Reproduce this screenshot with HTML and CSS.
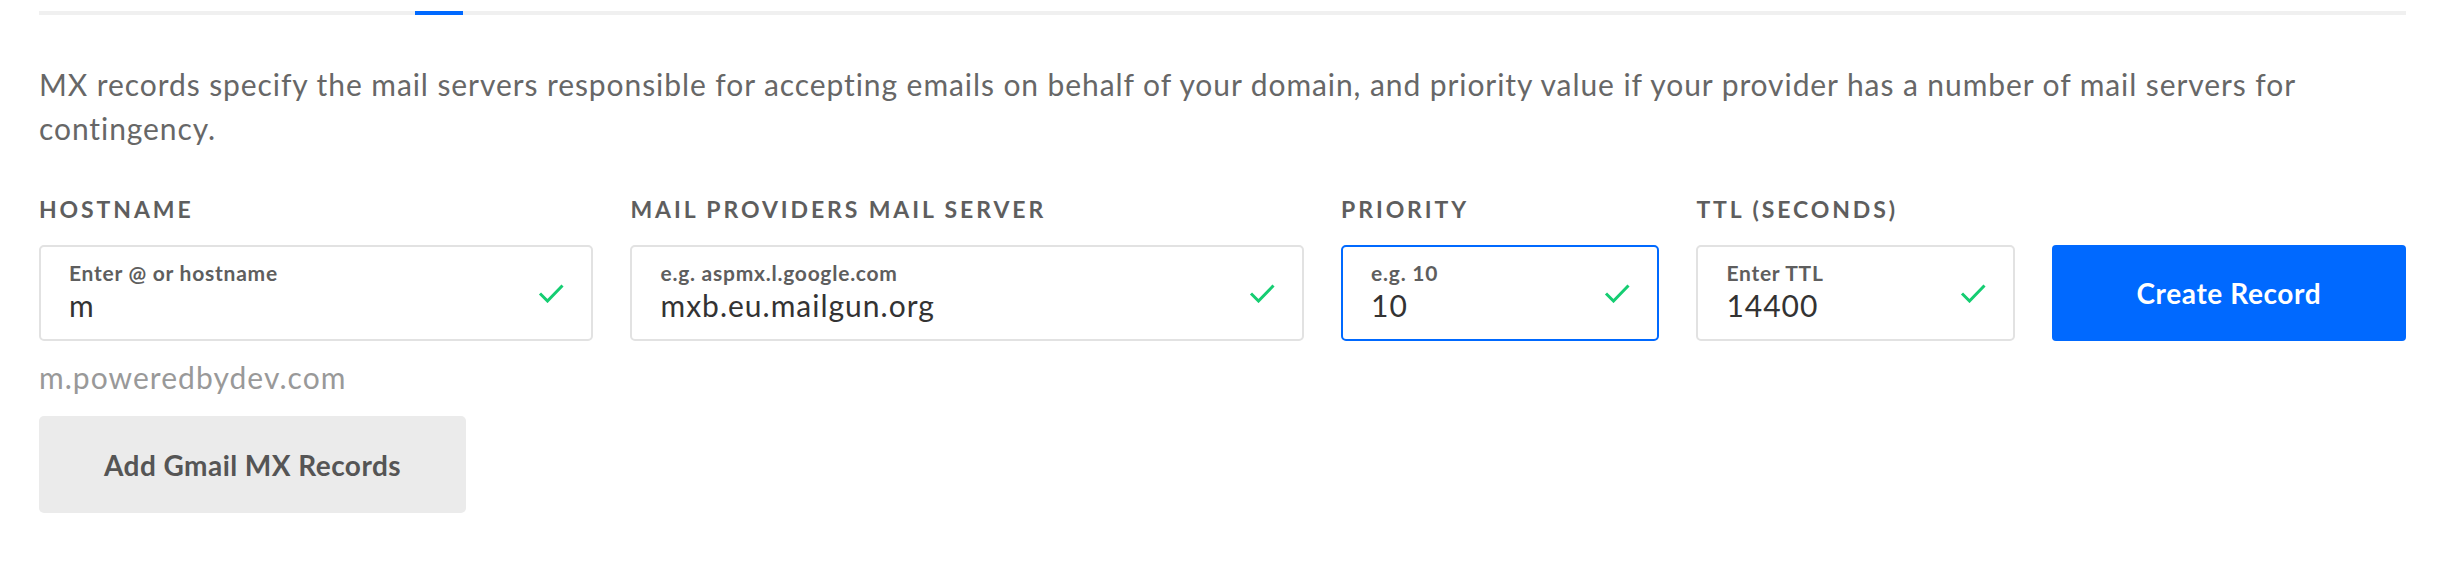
FILE: index.html
```html
<!DOCTYPE html>
<html lang="en">
<head>
<meta charset="utf-8">
<title>MX Records</title>
<link rel="stylesheet" href="styles.css">
</head>
<body>
<div class="page">
  <div class="tabbar">
    <div class="tab-spacer"></div>
    <div class="tab-active"></div>
  </div>

  <p class="intro">MX records specify the mail servers responsible for accepting emails on behalf of your domain, and priority value if your provider has a number of mail servers for contingency.</p>

  <div class="fields">
    <div class="field">
      <div class="field-label">HOSTNAME</div>
      <div class="input">
        <div class="input-text">
          <div class="input-hint">Enter @ or hostname</div>
          <div class="input-value">m</div>
        </div>
        <svg class="check" viewBox="0 0 26 20" width="26" height="20"><path d="M2 10.5 L9.5 18 L24.5 2.5" fill="none" stroke="#15cd72" stroke-width="3"/></svg>
      </div>
    </div>
    <div class="field">
      <div class="field-label">MAIL PROVIDERS MAIL SERVER</div>
      <div class="input">
        <div class="input-text">
          <div class="input-hint">e.g. aspmx.l.google.com</div>
          <div class="input-value">mxb.eu.mailgun.org</div>
        </div>
        <svg class="check" viewBox="0 0 26 20" width="26" height="20"><path d="M2 10.5 L9.5 18 L24.5 2.5" fill="none" stroke="#15cd72" stroke-width="3"/></svg>
      </div>
    </div>
    <div class="field">
      <div class="field-label">PRIORITY</div>
      <div class="input input-focused">
        <div class="input-text">
          <div class="input-hint">e.g. 10</div>
          <div class="input-value">10</div>
        </div>
        <svg class="check" viewBox="0 0 26 20" width="26" height="20"><path d="M2 10.5 L9.5 18 L24.5 2.5" fill="none" stroke="#15cd72" stroke-width="3"/></svg>
      </div>
    </div>
    <div class="field">
      <div class="field-label">TTL (SECONDS)</div>
      <div class="input">
        <div class="input-text">
          <div class="input-hint">Enter TTL</div>
          <div class="input-value">14400</div>
        </div>
        <svg class="check" viewBox="0 0 26 20" width="26" height="20"><path d="M2 10.5 L9.5 18 L24.5 2.5" fill="none" stroke="#15cd72" stroke-width="3"/></svg>
      </div>
    </div>
    <div class="field field-action">
      <button class="btn-primary" type="button">Create Record</button>
    </div>
  </div>

  <div class="helper">m.poweredbydev.com</div>

  <button class="btn-secondary" type="button">Add Gmail MX Records</button>
</div>
</body>
</html>
```

FILE: styles.css
```css
* {
  box-sizing: border-box;
}

html, body {
  margin: 0;
  padding: 0;
  background: #ffffff;
}

body {
  font-family: "Lato", "Open Sans", sans-serif;
  color: #676767;
}

.page {
  padding: 11px 35px 0 39px;
}

.tabbar {
  display: flex;
  height: 4px;
  background: #f0f0f0;
}

.tab-spacer {
  width: 376px;
}

.tab-active {
  width: 48px;
  background: #0069ff;
}

.intro {
  margin: 47px 0 0 0;
  font-size: 30px;
  line-height: 44px;
  letter-spacing: 0.92px;
  color: #676767;
}

.fields {
  display: grid;
  grid-template-columns: 554fr 673fr 318fr 318fr 354fr;
  column-gap: 37px;
  align-items: end;
  margin-top: 45px;
}

.field {
  display: flex;
  flex-direction: column;
}

.field-label {
  font-size: 23px;
  line-height: 28px;
  font-weight: 700;
  letter-spacing: 2.9px;
  color: #5e5e5e;
  margin-bottom: 22px;
}

.input {
  height: 96px;
  border: 2px solid #e2e2e2;
  border-radius: 5px;
  padding: 14px 27px 0 28px;
  display: flex;
  align-items: flex-start;
  justify-content: space-between;
  background: #fff;
}

.input-focused {
  border-color: #0069ff;
}

.input-hint {
  font-size: 21px;
  line-height: 24px;
  font-weight: 700;
  letter-spacing: 0.75px;
  color: #5e5e5e;
}

.input-value {
  margin-top: 2px;
  font-size: 30px;
  line-height: 36px;
  letter-spacing: 1px;
  color: #333333;
}

.check {
  align-self: center;
  margin-top: -14px;
  flex-shrink: 0;
}

.btn-primary {
  height: 96px;
  width: 100%;
  border: none;
  border-radius: 4px;
  background: #0069ff;
  color: #ffffff;
  font-family: "Lato", "Open Sans", sans-serif;
  font-size: 28px;
  font-weight: 700;
  letter-spacing: 0.6px;
  padding: 0;
}

.helper {
  margin-top: 20px;
  font-size: 30px;
  line-height: 32px;
  letter-spacing: 1.05px;
  color: #999999;
}

.btn-secondary {
  display: block;
  margin-top: 23px;
  width: 427px;
  height: 97px;
  border: none;
  border-radius: 5px;
  background: #ebebeb;
  color: #555555;
  font-family: "Lato", "Open Sans", sans-serif;
  font-size: 28px;
  font-weight: 700;
  letter-spacing: 0.45px;
  padding: 0;
}
```
